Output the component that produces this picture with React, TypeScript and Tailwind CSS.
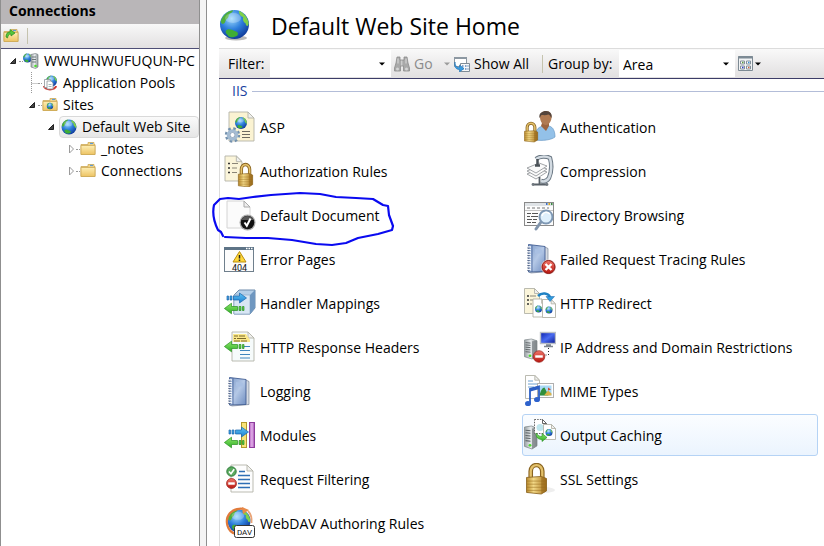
import React from "react";

type P = { children?: React.ReactNode };

function Defs() {
  return (
    <svg className="absolute size-0" aria-hidden="true">
      <defs>
        <radialGradient id="sea" cx="0.4" cy="0.3" r="0.75">
          <stop offset="0" stopColor="#9ad8fd" />
          <stop offset="0.5" stopColor="#2d7edb" />
          <stop offset="1" stopColor="#0d3594" />
        </radialGradient>
        <linearGradient id="gold" x1="0" x2="1" y1="0" y2="0">
          <stop offset="0" stopColor="#b98a2c" />
          <stop offset="0.35" stopColor="#f3d987" />
          <stop offset="1" stopColor="#a8731c" />
        </linearGradient>
        <linearGradient id="folder" x1="0" x2="0" y1="0" y2="1">
          <stop offset="0" stopColor="#fdeeb4" />
          <stop offset="1" stopColor="#edc363" />
        </linearGradient>
        <linearGradient id="book" x1="0" x2="1" y1="0" y2="1">
          <stop offset="0" stopColor="#7f9cc9" />
          <stop offset="0.5" stopColor="#b4c8e6" />
          <stop offset="1" stopColor="#6f8dc0" />
        </linearGradient>
        <linearGradient id="steel" x1="0" x2="1" y1="0" y2="0">
          <stop offset="0" stopColor="#9aa1a4" />
          <stop offset="0.5" stopColor="#e9edef" />
          <stop offset="1" stopColor="#8c9497" />
        </linearGradient>
        <linearGradient id="blueArrow" x1="0" x2="0" y1="0" y2="1">
          <stop offset="0" stopColor="#5fc4f5" />
          <stop offset="1" stopColor="#1c7fd0" />
        </linearGradient>
        <linearGradient id="greenArrow" x1="0" x2="0" y1="0" y2="1">
          <stop offset="0" stopColor="#8ee86a" />
          <stop offset="1" stopColor="#2fae26" />
        </linearGradient>
        <linearGradient id="red" x1="0" x2="0" y1="0" y2="1">
          <stop offset="0" stopColor="#f0766a" />
          <stop offset="1" stopColor="#b8160f" />
        </linearGradient>
        <linearGradient id="purple" x1="0" x2="1" y1="0" y2="0">
          <stop offset="0" stopColor="#b867c4" />
          <stop offset="0.5" stopColor="#e3b0ea" />
          <stop offset="1" stopColor="#a14bb0" />
        </linearGradient>
        <linearGradient id="screen" x1="0" x2="1" y1="0" y2="1">
          <stop offset="0" stopColor="#0a1fae" />
          <stop offset="0.5" stopColor="#4a6cf0" />
          <stop offset="1" stopColor="#0a1a90" />
        </linearGradient>
      </defs>
    </svg>
  );
}

function Svg({ children }: P) {
  return (
    <svg viewBox="0 0 32 32" className="size-8 shrink-0" aria-hidden="true">
      {children}
    </svg>
  );
}

function Globe({ x, y, r }: { x: number; y: number; r: number }) {
  return (
    <g transform={`translate(${x} ${y}) scale(${r / 10})`}>
      <circle r="10" fill="url(#sea)" />
      <path d="M-9.500 -2C-8.500 -6-5 -9.600-1 -9.900C-1 -8.500-3 -8-4 -6.500C-4 -4-6 -4-6.500 -1.500C-7.500 0-9 0-9.500 -2Z" fill="#4fae3c" />
      <path d="M3 -9.400C6 -8.500 9 -5 9.800 -1C9.500 2 8 1.500 7.500 -1C6 -1.500 5.500 -4 6 -5C4 -5.500 3 -7 3 -9.400Z" fill="#7ed04a" />
      <path d="M-6 4.500C-5 2.500 -2 3.500 0 4.500C2 5 3 6 2 7.500C0 9-3 9-4 8.200C-5 7-6.500 6-6 4.500Z" fill="#3fae35" />
      <ellipse cx="-1" cy="-4.500" rx="5.500" ry="3.500" fill="#fff" opacity="0.25" />
    </g>
  );
}

function Page({ x, y, w, h, fill = "#fff", dash }: { x: number; y: number; w: number; h: number; fill?: string; dash?: boolean }) {
  const f = Math.min(6, w / 3);
  return (
    <g stroke={dash ? "#555" : "#b3b3a8"} strokeWidth="0.9">
      <path d={`M${x} ${y}h${w - f}l${f} ${f}v${h - f}h${-w}Z`} fill={fill} strokeDasharray={dash ? "1.500 1.200" : undefined} />
      <path d={`M${x + w - f} ${y}v${f}h${f}Z`} fill={dash ? "#fff" : "#f0f0ee"} />
    </g>
  );
}

function Lock({ x, y, w, h }: { x: number; y: number; w: number; h: number }) {
  return (
    <g transform={`translate(${x} ${y}) scale(${w / 20} ${h / 30})`}>
      <path d="M4.500 15V8a5.500 6 0 0 1 11 0v7" fill="none" stroke="#8a6420" strokeWidth="4.400" />
      <path d="M4.500 15V8a5.500 6 0 0 1 11 0v7" fill="none" stroke="#e3c16b" strokeWidth="2.200" />
      <path d="M0.500 14l14-1 5 2v12l-5 3-14-1.500Z" fill="url(#gold)" stroke="#8a6420" strokeWidth="0.800" />
      <path d="M1 17.500h18M1 20.500h18M1 23.500h18M1 26.500h18" stroke="#9c7222" strokeWidth="0.900" opacity="0.6" />
      <path d="M14.500 13v17l5-3V15Z" fill="#946619" opacity="0.55" />
    </g>
  );
}

function RightArrow({ x, y }: { x: number; y: number }) {
  return (
    <g transform={`translate(${x} ${y})`} fill="url(#blueArrow)" stroke="#1a65ad" strokeWidth="0.700">
      <path d="M0 3h1.500v4H0ZM3 3h2v4H3ZM6.500 3h6V0l7 5-7 5V7h-6Z" />
    </g>
  );
}

function LeftArrow({ x, y }: { x: number; y: number }) {
  return (
    <g transform={`translate(${x} ${y})`} fill="url(#greenArrow)" stroke="#278f20" strokeWidth="0.700">
      <path d="M20 3.500h-1.500v4H20ZM17 3.500h-2v4h2ZM13.500 3.500H7.500V0.200L0.400 5.500l7.100 5.300V7.500h6Z" />
    </g>
  );
}

function Book({ x, y }: { x: number; y: number }) {
  return (
    <g transform={`translate(${x} ${y})`}>
      <path d="M18 3l3 1.500v23L4 29l-2-1Z" fill="#d5dae2" stroke="#69758c" strokeWidth="0.600" />
      <path d="M1.500 0.500L18 2.500v25L1.500 28Z" fill="url(#book)" stroke="#435f93" strokeWidth="0.900" />
      <path d="M5 1v27" stroke="#49659a" strokeWidth="0.800" />
      <path d="M8 5l7 0.800v4L8 9.300Z" fill="#a9c0e3" />
      <path d="M0 3h4M0 5.500h4M0 8h4M0 10.500h4M0 13h4M0 15.500h4M0 18h4M0 20.500h4M0 23h4M0 25.500h4" stroke="#f4f6fa" strokeWidth="1.300" />
      <path d="M0 4h3M0 6.500h3M0 9h3M0 11.500h3M0 14h3M0 16.500h3M0 19h3M0 21.500h3M0 24h3M0 26.500h3" stroke="#465878" strokeWidth="0.600" />
    </g>
  );
}

function Tower({ x, y, h }: { x: number; y: number; h: number }) {
  return (
    <g transform={`translate(${x} ${y}) scale(1 ${h / 22})`}>
      <path d="M0.500 1l7-1L13 2v17l-5 3-7.500-2.500Z" fill="url(#steel)" stroke="#7a8285" strokeWidth="0.700" />
      <path d="M8 2.500L13 2v17l-5 3Z" fill="#7b8285" opacity="0.75" />
      <path d="M1.500 4l5 0.500M1.500 6.500l5 0.500M1.500 9l5 0.500M1.500 11.500l5 0.500M1.500 14l5 0.500" stroke="#5c6366" strokeWidth="1" />
      <circle cx="6" cy="18.500" r="1.400" fill="#4ddc2c" />
    </g>
  );
}

function NoEntry({ x, y, r }: { x: number; y: number; r: number }) {
  return (
    <g>
      <circle cx={x} cy={y} r={r} fill="url(#red)" stroke="#96201a" strokeWidth="0.700" />
      <rect x={x - r * 0.65} y={y - 1.2} width={r * 1.3} height="2.400" fill="#fff" />
    </g>
  );
}

const AspIcon = () => (
  <Svg>
    <Page x={5} y={1} w={25} h={29} fill="#fbf3d2" />
    <Globe x={17} y={12} r={6} />
    <path d="M18 20.500h8M18 23.500h8M18 26.500h8" stroke="#6d6a60" />
    <circle cx="8.500" cy="24" r="6.200" fill="none" stroke="#7391ae" strokeWidth="3" strokeDasharray="2.400 2.470" />
    <circle cx="8.500" cy="24" r="4.300" fill="#fff" stroke="#a3bbd2" strokeWidth="3" />
    <circle cx="8.500" cy="24" r="2.500" fill="#fff" stroke="#6c88a5" strokeWidth="0.700" />
  </Svg>
);

const AuthorizationIcon = () => (
  <Svg>
    <Page x={1} y={1} w={17} h={25} fill="#fbf5da" />
    <path d="M4 8.500h2M4 13h2M4 17.500h2" stroke="#333" strokeWidth="1.600" />
    <path d="M8 8.500h6M8 13h5M8 17.500h5" stroke="#8a8577" />
    <Lock x={14} y={8} w={15} h={24} />
  </Svg>
);

const DefaultDocIcon = () => (
  <Svg>
    <g stroke="#d4d4d4">
      <path d="M3 2h17l6 6v21H3Z" fill="#fbfbfb" />
      <path d="M20 2v6h6Z" fill="#eee" stroke="#a9a9a9" />
    </g>
    <circle cx="23.500" cy="23.500" r="8" fill="#aaa" />
    <circle cx="23.500" cy="23.500" r="6.800" fill="#111" />
    <path d="M17.500 21a6.500 6.500 0 0 1 12 0Z" fill="#555" />
    <path d="M20.500 23.500l2.300 3.300 3.700-7.300" fill="none" stroke="#fff" strokeWidth="2" />
  </Svg>
);

const ErrorPagesIcon = () => (
  <Svg>
    <rect x="0.500" y="4.500" width="29" height="24" fill="#fcfcfc" stroke="#6f7f8c" />
    <path d="M0 5.500h30" stroke="#5e7487" strokeWidth="3" />
    <path d="M22 5.500h1.500M24.500 5.500h1.500M27 5.500h1.500" stroke="#fff" strokeWidth="1.500" />
    <path d="M15.500 8.500L22 19H9Z" fill="#ffd83a" stroke="#b98d0f" strokeLinejoin="round" />
    <path d="M15.500 12v3.500M15.500 16.500v1.500" stroke="#222" strokeWidth="1.500" />
    <text x="15.500" y="27.500" textAnchor="middle" fontSize="9" fontFamily="Roboto, sans-serif" fill="#111">404</text>
  </Svg>
);

const HandlerIcon = () => (
  <Svg>
    <path d="M10 8l5-5h16v18l-5 6H10Z" fill="#b4cfe8" stroke="#6d8bab" />
    <path d="M10 8h16v19H10Z" fill="#d8e6f4" stroke="#8fa9c6" strokeWidth="0.700" />
    <path d="M26 8l5-5v18l-5 6Z" fill="#6f97c0" />
    <RightArrow x={3} y={6} />
    <LeftArrow x={0} y={16} />
  </Svg>
);

const HeadersIcon = () => (
  <Svg>
    <Page x={8} y={1} w={22} h={29} fill="#f6fbfb" />
    <path d="M9 3h13l4 6v2H9Z" fill="#fbe88a" />
    <path d="M10 5h4M15 5h6M10 7.500h2M13 7.500h9M10 10h6M17 10h6" stroke="#7c6a2a" strokeWidth="1.200" />
    <path d="M20 15.500h6M16 19.500h10M16 23.500h10M16 27h10" stroke="#3f86bd" strokeWidth="1.200" />
    <LeftArrow x={0} y={10} />
  </Svg>
);

const LoggingIcon = () => (
  <Svg>
    <Book x={4} y={2} />
  </Svg>
);

const ModulesIcon = () => (
  <Svg>
    <rect x="17.500" y="3.500" width="5" height="25" fill="#f8e37a" stroke="#b2982c" />
    <rect x="25.500" y="3.500" width="5" height="25" fill="url(#purple)" stroke="#8d3c9c" />
    <RightArrow x={5} y={8} />
    <LeftArrow x={0} y={18} />
  </Svg>
);

const FilteringIcon = () => (
  <Svg>
    <Page x={7} y={2} w={22} h={27} fill="#fdfdfd" />
    <path d="M15 8.500h6M14 12.500h12M14 16.500h12M14 20.500h12M14 24.500h12" stroke="#2f6fb5" strokeWidth="1.300" />
    <circle cx="7.500" cy="8.500" r="4.700" fill="#5bab5f" stroke="#2d7a38" />
    <path d="M5 8.500l2 2.300 3.200-4.600" fill="none" stroke="#fff" strokeWidth="1.600" />
    <NoEntry x={7.5} y={20.5} r={5} />
  </Svg>
);

const WebDavIcon = () => (
  <Svg>
    <Globe x={15} y={14} r={11.5} />
    <path d="M12 27C3 25 0 13 6 6C10 2 16 1 20 2" fill="none" stroke="#e07a3a" strokeWidth="2.200" />
    <path d="M18 0l7 3-6 4Z" fill="#e88a48" />
    <path d="M24 4c3 3 4 7 3.500 12" fill="none" stroke="#e9a477" strokeWidth="1.800" />
    <rect x="10.500" y="18.500" width="20" height="12" rx="2" fill="#fff" stroke="#333" />
    <text x="20.500" y="28" textAnchor="middle" fontSize="8" fontFamily="Roboto, sans-serif" fill="#111">DAV</text>
  </Svg>
);

const AuthenticationIcon = () => (
  <Svg>
    <path d="M11 29c-1-9 3-13 8-14h6c4 1 6 5 6 11-4 3-12 4-20 3Z" fill="#93c1e8" stroke="#6c9bc6" strokeWidth="0.700" />
    <path d="M17 15l5 5 3-5v-3h-7Z" fill="#9d6540" />
    <path d="M16 6c0-4 3-6 6-6 4 0 6 3 5.500 7-0.500 4-3 7-5.500 7-3 0-6-3-6-8Z" fill="#b07a52" />
    <path d="M15.500 7c-1-5 3-7 6.500-7 4 0 6.500 3 5.500 7-1-1-1.500-3-3-3.500-3 1-5 0.500-7 0.500-1 1-1 2-2 3Z" fill="#54453c" />
    <Lock x={0} y={11} w={14} h={20} />
  </Svg>
);

const CompressionIcon = () => (
  <Svg>
    <path d="M12 4c4-3 10-3 14-1 2 7 1.500 14-1 20-2 3-5 4-8 3" fill="none" stroke="#6a7783" strokeWidth="4.500" />
    <path d="M12 4c4-3 10-3 14-1 2 7 1.500 14-1 20-2 3-5 4-8 3" fill="none" stroke="#d3dbe2" strokeWidth="2.500" />
    <g fill="#fafafa" stroke="#8b8f93" strokeWidth="0.800">
      <path d="M3 19l12-5 8 3-11 7Z" />
      <path d="M3 16l12-5 8 3-11 7Z" />
      <path d="M3 13l12-5 8 3-11 7Z" />
    </g>
    <path d="M13.500 4v6M11 10.500h5" stroke="#4a5157" strokeWidth="2.500" />
    <path d="M15.500 22v8M9 29.500h14" stroke="#596168" strokeWidth="1.800" />
    <circle cx="9" cy="29.500" r="1.400" fill="#70787f" />
    <circle cx="23" cy="29.500" r="1.400" fill="#70787f" />
  </Svg>
);

const DirectoryIcon = () => (
  <Svg>
    <rect x="0.500" y="3.500" width="29" height="23" fill="#fcfcfc" stroke="#8a8a8a" />
    <path d="M1 5.500h28" stroke="#dfe3e6" strokeWidth="3" />
    <path d="M22 5h1.500" stroke="#3b6fc9" strokeWidth="2" />
    <path d="M24.500 5H26" stroke="#d9a520" strokeWidth="2" />
    <path d="M27 5h1.500" stroke="#3b8b3f" strokeWidth="2" />
    <path d="M3 9h22" stroke="#777" strokeDasharray="3 2" />
    <path d="M1 11.500h28" stroke="#c4c4c4" />
    <path d="M3 14.500h4M8 14.500h6M3 17.500h3M7 17.500h7M3 20.500h5M9 20.500h4M3 23.500h4M8 23.500h4" stroke="#555" />
    <path d="M17 23l-5 7" stroke="#8094ab" strokeWidth="3" strokeLinecap="round" />
    <circle cx="22" cy="18" r="6.500" fill="#dff0fc" stroke="#7d97b3" strokeWidth="2" />
    <path d="M18 17c1-4 5-5 8-2" fill="none" stroke="#fff" strokeWidth="1.500" />
  </Svg>
);

const FailedIcon = () => (
  <Svg>
    <Book x={3} y={1} />
    <circle cx="24.500" cy="24" r="7.500" fill="#eadada" />
    <circle cx="24.500" cy="24" r="6.500" fill="url(#red)" stroke="#8d1712" />
    <path d="M21.500 21l6 6M27.500 21l-6 6" stroke="#fff" strokeWidth="2.400" />
  </Svg>
);

const RedirectIcon = () => (
  <Svg>
    <Page x={0.5} y={1.5} w={15} h={25} fill="#fbf5da" />
    <path d="M3 9h2M3 13h2M3 17h2" stroke="#333" strokeWidth="1.500" />
    <path d="M6 9h6M6 13h3M6 17h2" stroke="#8a8577" />
    <Page x={9} y={12} w={13} h={18} />
    <Globe x={14.5} y={22} r={3.5} />
    <Page x={18.5} y={12.5} w={13} h={18} />
    <Globe x={25} y={23} r={3.5} />
    <path d="M14 9c4-4 10-3 12 1" fill="none" stroke="#2182c4" strokeWidth="2.600" />
    <path d="M22 9.500h8.500L26 14.500Z" fill="#2f9bdc" stroke="#1a65ad" strokeWidth="0.500" />
  </Svg>
);

const IpIcon = () => (
  <Svg>
    <Tower x={0} y={8} h={20} />
    <rect x="16.500" y="1.500" width="15" height="11" fill="url(#screen)" stroke="#b9bec6" strokeWidth="1.400" />
    <path d="M22 14h5M20 15.500h9" stroke="#7e868e" strokeWidth="1.500" />
    <path d="M24.500 17v7h-5" fill="none" stroke="#222" strokeDasharray="1 2" />
    <NoEntry x={15} y={25.5} r={5.8} />
  </Svg>
);

const MimeIcon = () => (
  <Svg>
    <Page x={1.5} y={0.5} w={14} h={23} />
    <path d="M4 6h5M4 9h9M4 12h6" stroke="#6fa2d2" />
    <rect x="13.500" y="8.500" width="16" height="14" fill="#fff" stroke="#b0b0b0" />
    <rect x="15.500" y="10.500" width="12" height="10" fill="#a9d8f6" />
    <path d="M15.500 20.500c1-5 3-8 5-8l4 8Z" fill="#2f8f3a" />
    <path d="M20 20.500l4-5 3.500 3v2Z" fill="#dcb248" />
    <path d="M24 12.500l3 2-3 1Z" fill="#cc4b32" />
    <path d="M6 28V14l9-2.500V24" fill="none" stroke="#2c5fc4" strokeWidth="1.800" />
    <path d="M6 15l9-2.500" stroke="#2c5fc4" strokeWidth="3" />
    <ellipse cx="4" cy="28.500" rx="3" ry="2.600" fill="#2e62cc" />
    <ellipse cx="13" cy="24.500" rx="3" ry="2.600" fill="#2e62cc" />
  </Svg>
);

const CachingIcon = () => (
  <Svg>
    <Tower x={0} y={7} h={23} />
    <Page x={10.5} y={0.5} w={12} h={14} dash />
    <circle cx="16" cy="8.500" r="3.500" fill="#bfe6ee" />
    <Page x={19.5} y={5.5} w={12} h={15} />
    <Globe x={25} y={13.5} r={3.5} />
    <path d="M12 14c2 3 4 3.500 6 3.500v-3l5 4-5 4V20.500c-4 0-6-2-6-6.500Z" fill="url(#greenArrow)" stroke="#278f20" strokeWidth="0.600" />
  </Svg>
);

const SslIcon = () => (
  <Svg>
    <ellipse cx="20" cy="27" rx="11" ry="3" fill="#eee" />
    <Lock x={2} y={0} w={21} h={31} />
  </Svg>
);

const features: { name: string; Icon: () => React.ReactElement; hot?: boolean }[] = [
  { name: "ASP", Icon: AspIcon },
  { name: "Authentication", Icon: AuthenticationIcon },
  { name: "Authorization Rules", Icon: AuthorizationIcon },
  { name: "Compression", Icon: CompressionIcon },
  { name: "Default Document", Icon: DefaultDocIcon },
  { name: "Directory Browsing", Icon: DirectoryIcon },
  { name: "Error Pages", Icon: ErrorPagesIcon },
  { name: "Failed Request Tracing Rules", Icon: FailedIcon },
  { name: "Handler Mappings", Icon: HandlerIcon },
  { name: "HTTP Redirect", Icon: RedirectIcon },
  { name: "HTTP Response Headers", Icon: HeadersIcon },
  { name: "IP Address and Domain Restrictions", Icon: IpIcon },
  { name: "Logging", Icon: LoggingIcon },
  { name: "MIME Types", Icon: MimeIcon },
  { name: "Modules", Icon: ModulesIcon },
  { name: "Output Caching", Icon: CachingIcon, hot: true },
  { name: "Request Filtering", Icon: FilteringIcon },
  { name: "SSL Settings", Icon: SslIcon },
  { name: "WebDAV Authoring Rules", Icon: WebDavIcon },
];

function Small({ children }: P) {
  return (
    <svg viewBox="0 0 16 16" className="size-4 shrink-0" aria-hidden="true">
      {children}
    </svg>
  );
}

function FolderShape() {
  return (
    <g stroke="#cdaa58" strokeWidth="0.800">
      <path d="M8 3.500V1.500h6v2h1v10H1v-10Z" fill="#f3d588" />
      <path d="M10 2.500h3" stroke="#5b9bd8" strokeWidth="1.200" />
      <path d="M1 4.500h14v9H1Z" fill="url(#folder)" />
    </g>
  );
}

const FolderIcon = () => (
  <Small>
    <FolderShape />
  </Small>
);

const SitesIcon = () => (
  <Small>
    <FolderShape />
    <Globe x={8} y={9} r={3.2} />
  </Small>
);

const GlobeIcon = () => (
  <Small>
    <Globe x={8} y={8} r={7.5} />
  </Small>
);

const ServerIcon = () => (
  <Small>
    <Globe x={4.5} y={5} r={4.5} />
    <path d="M8 1.500l4.500-1 2.500 1v12.500l-2.500 1.500-4.500-1.500Z" fill="url(#steel)" stroke="#7c8487" strokeWidth="0.700" />
    <path d="M9 4h4M9 6.500h4M9 9h4" stroke="#6c7679" />
    <circle cx="12.500" cy="13" r="1.300" fill="#4ddc2c" />
  </Small>
);

const PoolsIcon = () => (
  <Small>
    <Globe x={9.5} y={6} r={5.5} />
    <path d="M2 11a6 3.500 0 0 0 12 0" fill="none" stroke="#cf3b34" strokeWidth="2" />
    <path d="M2.500 4.500h6v8h-6Z" fill="#fff" stroke="#8d9499" strokeWidth="0.800" />
    <path d="M5 6h4l2 2v6H5Z" fill="#fff" stroke="#8d9499" strokeWidth="0.800" />
    <path d="M6.500 9.500h3M6.500 11.500h3" stroke="#8aa" strokeWidth="0.800" />
  </Small>
);

const tree: { name: string; Icon: () => React.ReactElement; indent: string; open?: boolean; selected?: boolean; guide: string }[] = [
  { name: "WWUHNWUFUQUN-PC", Icon: ServerIcon, indent: "pl-2", open: true, guide: "w-1" },
  { name: "Application Pools", Icon: PoolsIcon, indent: "pl-[27px]", guide: "w-1" },
  { name: "Sites", Icon: SitesIcon, indent: "pl-[27px]", open: true, guide: "w-1" },
  { name: "Default Web Site", Icon: GlobeIcon, indent: "pl-[46px]", open: true, selected: true, guide: "w-0" },
  { name: "_notes", Icon: FolderIcon, indent: "pl-[65px]", open: false, guide: "w-1" },
  { name: "Connections", Icon: FolderIcon, indent: "pl-[65px]", open: false, guide: "w-1" },
];

function Expander({ open }: { open?: boolean }) {
  return (
    <svg viewBox="0 0 10 22" className="h-[22px] w-2.5 shrink-0" aria-hidden="true">
      {open === true && <path d="M6.500 8.500V13.500H1.500Z" fill="#444" stroke="#222" />}
      {open === false && <path d="M3.500 7l4 4-4 4Z" fill="#fff" stroke="#9a9a9a" />}
      {open === undefined && <path d="M3.500 0v22M3.500 11.500H10" fill="none" stroke="#999" strokeDasharray="1 1" />}
    </svg>
  );
}

function Sidebar() {
  return (
    <aside className="flex w-[200px] shrink-0 flex-col overflow-hidden border-x border-[#8f8f8f] bg-white">
      <h2 className="h-6 bg-[#b9b6b8] pl-2 text-[14px] leading-[22px] font-bold">Connections</h2>
      <div className="flex h-[25px] items-center gap-2 border-b border-[#4e4e76] bg-linear-to-b from-[#f8f8f8] to-[#e2e0e1] pl-0.5">
        <button type="button" aria-label="Up" className="size-4">
          <Small>
            <FolderShape />
            <path d="M3 9c0-3 1-5 4-5V1.500L12 5 8 8V6C5.500 6 5 8 4.500 10Z" fill="#54c73c" stroke="#2b8a20" strokeWidth="0.700" />
          </Small>
        </button>
        <span className="h-4 w-px bg-[#c5c3ae]" />
      </div>
      <ul className="pt-px">
        {tree.map(({ name, Icon, indent, open, selected, guide }) => (
          <li key={name} className={`flex h-[22px] items-center ${indent}`}>
            <Expander open={open} />
            <span className={`shrink-0 border-t border-dotted border-[#999] ${guide}`} />
            <button
              type="button"
              className={`flex h-[22px] items-center gap-[5px] whitespace-nowrap ${
                selected ? "ml-0.5 grow rounded-sm border border-[#d9d9d9] bg-linear-to-b from-[#fafafa] to-[#e6e6e6] pl-px" : ""
              }`}
            >
              <Icon />
              {name}
            </button>
          </li>
        ))}
      </ul>
    </aside>
  );
}

function Caret({ className }: { className: string }) {
  return (
    <svg viewBox="0 0 6 4" className={`h-1 w-1.5 shrink-0 ${className}`} aria-hidden="true">
      <path d="M0 0.500h6L3 3.500Z" fill="currentColor" />
    </svg>
  );
}

function Toolbar() {
  return (
    <div className="flex h-[31px] items-center overflow-hidden border-t border-b border-t-[#dcdcdc] border-b-[#3c3c68] bg-linear-to-b from-[#f9f9f9] to-[#e1dfe0] pl-[9px] whitespace-nowrap">
      <label htmlFor="filter" className="w-[42px] shrink-0">Filter:</label>
      <span className="relative flex h-[27px] w-[121px] shrink-0 items-center bg-white">
        <input id="filter" className="h-full w-full bg-transparent px-1 outline-none" />
        <Caret className="absolute right-1.5" />
      </span>
      <button type="button" className="ml-[3px] flex w-[44px] shrink-0 items-center gap-1 text-[#8b8b8b]">
        <Small>
          <path d="M3 1h3v3h4V1h3l1 6 1.500 5v3h-6v-5h-3v5h-6v-3L2 7Z" fill="#a9a9a9" stroke="#8b8b8b" strokeWidth="0.800" />
          <path d="M4 2.500v5M12 2.500v5M7.800 4.500v5" stroke="#ddd" />
          <circle cx="3.500" cy="13" r="1.500" fill="#d5d5d5" />
          <circle cx="12.500" cy="13" r="1.500" fill="#d5d5d5" />
        </Small>
        Go
      </button>
      <Caret className="ml-[6px] text-[#9b9b9b]" />
      <button type="button" className="ml-[4px] flex w-[84px] shrink-0 items-center gap-1">
        <Small>
          <path d="M0.500 1.500h12v9h-12Z" fill="#fff" stroke="#8d98a2" />
          <path d="M0 2h13" stroke="#8d98a2" strokeWidth="2" />
          <path d="M6.500 7.500h9v8h-9Z" fill="#f8f8f8" stroke="#7f8b96" />
          <path d="M8 10h1.500M11 10h1.500M13.500 10h1M8 13h1.500M11 13h1.500M13.500 13h1" stroke="#5b84b8" strokeWidth="1.500" />
          <path d="M1 6c0 4 2 5.500 4.500 5.500V9L10 12.500 5.500 16v-2.500C2 13.500 0 11 1 6Z" fill="#3a9be0" stroke="#1d6fb0" strokeWidth="0.600" />
        </Small>
        Show All
      </button>
      <span className="ml-[4px] h-[18px] w-px shrink-0 bg-[#c5c3ae]" />
      <label htmlFor="group" className="ml-[5px] w-[71px] shrink-0">Group by:</label>
      <span className="relative flex h-[27px] w-[116px] shrink-0 items-center bg-white">
        <select id="group" className="h-full w-full appearance-none bg-transparent px-1 pt-0.5 outline-none">
          <option>Area</option>
        </select>
        <Caret className="pointer-events-none absolute right-1.5" />
      </span>
      <button type="button" aria-label="View" className="ml-[3px] flex shrink-0 items-center gap-px">
        <Small>
          <path d="M0.500 0.500h14v14H0.500Z" fill="#f2f4f5" stroke="#7d8a94" />
          <path d="M0 1.500h15" stroke="#7d8a94" strokeWidth="2" />
          <path d="M2.500 5h4v3h-4ZM8.500 5h4v3h-4ZM2.500 10h4v3h-4ZM8.500 10h4v3h-4Z" fill="#fff" stroke="#84909a" />
          <path d="M4 6.500h1.500" stroke="#5a9a3a" strokeWidth="1.500" />
          <path d="M10 6.500h1.500" stroke="#3b8fd0" strokeWidth="1.500" />
          <path d="M4 11.500h1.500" stroke="#2a3ad0" strokeWidth="1.500" />
          <path d="M10 11.500h1.500" stroke="#d0603a" strokeWidth="1.500" />
        </Small>
        <Caret className="" />
      </button>
    </div>
  );
}

export default function App() {
  return (
    <div className="relative flex h-screen overflow-hidden bg-white font-['Open_Sans','Noto_Sans',sans-serif] text-[14px] leading-5 text-black">
      <Defs />
      <Sidebar />
      <div className="w-[7px] shrink-0 border-r border-[#8f8f8f] bg-[#f4f4f4]" />
      <main className="flex min-w-0 grow flex-col pl-3">
        <header className="flex h-12 shrink-0 items-center gap-5 pt-1">
          <svg viewBox="0 0 32 32" className="size-8 shrink-0" aria-hidden="true">
            <ellipse cx="17" cy="28" rx="11" ry="2.500" fill="#b9b9b9" />
            <Globe x={15.5} y={14.5} r={14.5} />
          </svg>
          <h1 className="text-[23px] leading-8 whitespace-nowrap">Default Web Site Home</h1>
        </header>
        <Toolbar />
        <section className="grow border-l border-[#dcdcdc] pl-0.5">
          <h2 className="flex h-[27px] items-center gap-1 pb-[3px] pl-2.5 text-[#1a3fa0] after:h-px after:grow after:bg-[#b3bdd8]">IIS</h2>
          <ul className="grid grid-cols-[repeat(auto-fill,296px)] gap-x-1 gap-y-0.5">
            {features.map(({ name, Icon, hot }) => (
              <li key={name}>
                <button
                  type="button"
                  className={`flex h-[42px] w-full items-center gap-1 rounded-[3px] border pl-px text-left whitespace-nowrap ${
                    hot ? "border-[#b5d3f5] bg-linear-to-b from-[#fbfdff] to-[#ebf4fe]" : "border-transparent"
                  }`}
                >
                  <Icon />
                  <span className="pt-0.5">{name}</span>
                </button>
              </li>
            ))}
          </ul>
        </section>
      </main>
      <svg viewBox="0 0 190 60" className="pointer-events-none absolute top-[190px] left-[208px] h-[60px] w-[190px]" aria-hidden="true">
        <path
          d="M15 46L13 42L10 40C7 34 4 24 6 15L12 9L20 8L31 9L45 7L63 5L92 3L112 4L128 7L148 8L165 9L175 15L180 16L181 25L185 36L184 40L170 44L150 48L138 53L124 55L108 54L84 50L60 48L38 48L17 47"
          fill="none"
          stroke="#0a0af0"
          strokeWidth="2.200"
          strokeLinecap="round"
          strokeLinejoin="round"
        />
      </svg>
    </div>
  );
}
